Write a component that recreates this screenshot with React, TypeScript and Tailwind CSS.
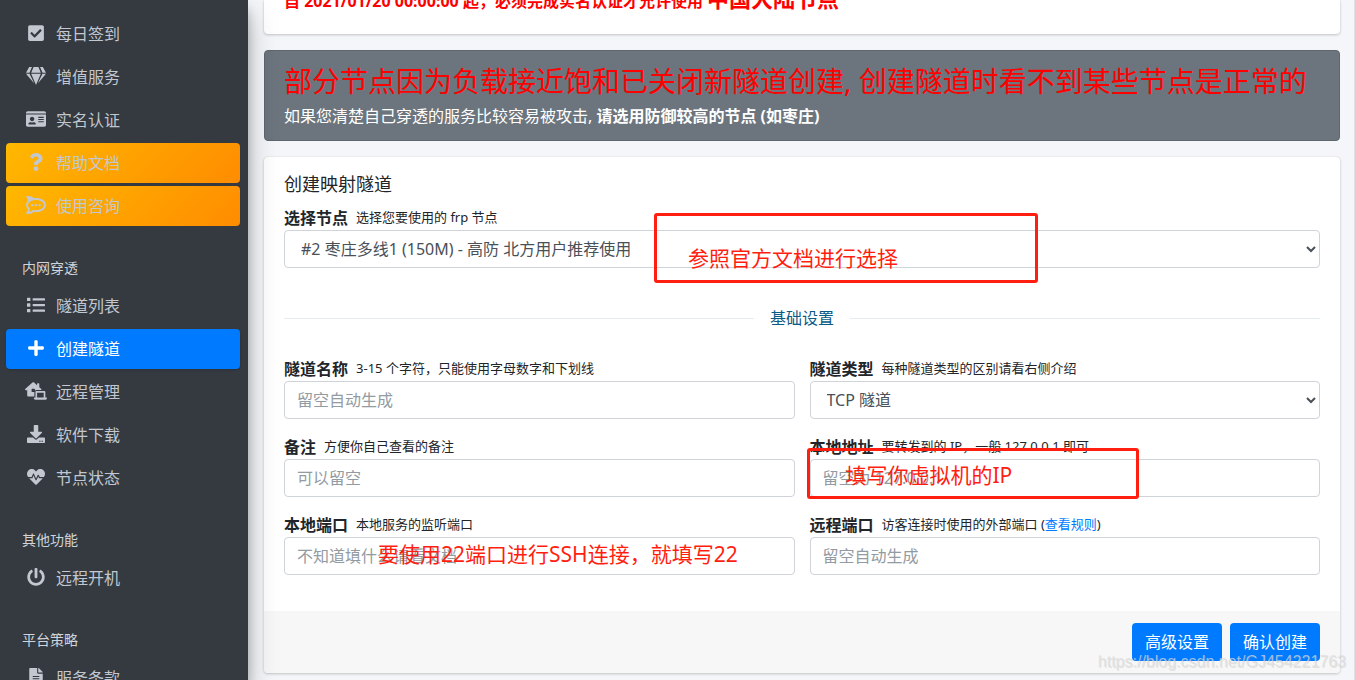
import React from 'react';
import {
  FaCheckSquare,
  FaDownload,
  FaFileAlt,
  FaGem,
  FaHeartbeat,
  FaIdCard,
  FaLaptopHouse,
  FaList,
  FaPlus,
  FaPowerOff,
  FaQuestion,
  FaRocketchat
} from 'react-icons/fa';
import type { IconType } from 'react-icons';

interface NavItem {
  label: string;
  icon: IconType;
  iconClassName?: string;
  variant?: 'default' | 'active' | 'highlight';
}

interface NavGroup {
  title?: string;
  items: NavItem[];
}

const navGroups: NavGroup[] = [
  {
    items: [
      { label: '每日签到', icon: FaCheckSquare },
      { label: '增值服务', icon: FaGem, iconClassName: 'w-5' },
      { label: '实名认证', icon: FaIdCard, iconClassName: 'w-5' },
      { label: '帮助文档', icon: FaQuestion, variant: 'highlight' },
      { label: '使用咨询', icon: FaRocketchat, iconClassName: 'w-5', variant: 'highlight' }
    ]
  },
  {
    title: '内网穿透',
    items: [
      { label: '隧道列表', icon: FaList },
      { label: '创建隧道', icon: FaPlus, variant: 'active' },
      { label: '远程管理', icon: FaLaptopHouse, iconClassName: 'w-[22px]' },
      { label: '软件下载', icon: FaDownload },
      { label: '节点状态', icon: FaHeartbeat }
    ]
  },
  {
    title: '其他功能',
    items: [{ label: '远程开机', icon: FaPowerOff }]
  },
  {
    title: '平台策略',
    items: [{ label: '服务条款', icon: FaFileAlt }]
  }
];

const controlStyles =
  'block w-full h-[38px] rounded border border-[#ced4da] bg-white px-3 text-base text-[#495057] placeholder:text-[#939ba2] placeholder:opacity-100';

function NavLink({ label, icon: Icon, iconClassName = 'w-[18px]', variant = 'default' }: NavItem) {
  const getVariantStyles = () => {
    switch (variant) {
      case 'active':
        return 'bg-[#007bff] text-white shadow';
      case 'highlight':
        return 'bg-linear-135 from-[#ffb800] via-[#ffa200] to-[#ff8c00] text-[#c2c7d0]';
      default:
        return 'text-[#c2c7d0] hover:bg-white/10';
    }
  };

  return (
    <a
      href="#"
      className={`flex h-10 items-center gap-1.5 rounded px-4 text-base ${getVariantStyles()}`}
    >
      <span className="flex w-7 justify-center pb-0.5">
        <Icon className={`h-[18px] ${iconClassName}`} />
      </span>
      {label}
    </a>
  );
}

function Sidebar() {
  return (
    <aside className="z-10 w-[248px] shrink-0 overflow-hidden bg-[#343a40] pt-3.5 pr-2 pl-1.5 shadow-[0_14px_28px_rgba(0,0,0,0.25),0_10px_10px_rgba(0,0,0,0.22)]">
      <nav>
        {navGroups.map((group, index) => (
          <div key={index}>
            {group.title && (
              <h2 className="px-4 pt-8 pb-2 text-sm text-[#d0d4db]">{group.title}</h2>
            )}
            <ul className="flex flex-col gap-[3px]">
              {group.items.map((item) => (
                <li key={item.label}>
                  <NavLink {...item} />
                </li>
              ))}
            </ul>
          </div>
        ))}
      </nav>
    </aside>
  );
}

interface FieldProps {
  id: string;
  label: string;
  hint: React.ReactNode;
  children: React.ReactNode;
}

function Field({ id, label, hint, children }: FieldProps) {
  return (
    <div>
      <div className="flex h-6 items-center gap-2 whitespace-nowrap text-[#212529]">
        <label htmlFor={id} className="text-base font-bold">
          {label}
        </label>
        <span className="text-[13px]">{hint}</span>
      </div>
      <div className="relative">{children}</div>
    </div>
  );
}

function NoteBox({ className, children }: { className: string; children: React.ReactNode }) {
  return (
    <div
      className={`pointer-events-none absolute rounded-[3px] border-3 border-[#ff1e10] text-[21px] leading-6 whitespace-nowrap text-[#ff1e10] ${className}`}
    >
      {children}
    </div>
  );
}

function TunnelForm() {
  return (
    <form className="overflow-hidden rounded bg-white shadow-[0_0_1px_rgba(0,0,0,0.125),0_1px_3px_rgba(0,0,0,0.2)]">
      <div className="px-5 pt-[13px] pb-9">
        <h3 className="mb-2 text-lg text-[#212529]">创建映射隧道</h3>

        <Field id="node" label="选择节点" hint="选择您要使用的 frp 节点">
          <select id="node" className={controlStyles}>
            <option>#2 枣庄多线1 (150M) - 高防 北方用户推荐使用</option>
          </select>
          <NoteBox className="-top-[17px] left-[370px] h-[70px] w-96 pt-[30px] pl-[31px]">
            参照官方文档进行选择
          </NoteBox>
        </Field>

        {/* Section divider */}
        <div className="mt-[38px] mb-[27px] flex items-center gap-4 text-base text-[#0c5a86]">
          <span className="h-px flex-1 bg-[#e4edf1]" />
          基础设置
          <span className="h-px flex-1 bg-[#e4edf1]" />
        </div>

        <div className="grid grid-cols-2 gap-x-[15px] gap-y-4">
          <Field id="name" label="隧道名称" hint="3-15 个字符，只能使用字母数字和下划线">
            <input id="name" type="text" placeholder="留空自动生成" className={controlStyles} />
          </Field>
          <Field id="type" label="隧道类型" hint="每种隧道类型的区别请看右侧介绍">
            <select id="type" className={controlStyles}>
              <option>TCP 隧道</option>
            </select>
          </Field>
          <Field id="remark" label="备注" hint="方便你自己查看的备注">
            <input id="remark" type="text" placeholder="可以留空" className={controlStyles} />
          </Field>
          <Field id="local-ip" label="本地地址" hint="要转发到的 IP，一般 127.0.0.1 即可">
            <input id="local-ip" type="text" placeholder="留空为 127.0.0.1" className={controlStyles} />
            <NoteBox className="-top-[11px] -left-[3px] h-[51px] w-[332px] pt-3 pl-9">
              填写你虚拟机的IP
            </NoteBox>
          </Field>
          <Field id="local-port" label="本地端口" hint="本地服务的监听端口">
            <input
              id="local-port"
              type="text"
              placeholder="不知道填什么请看文档"
              className={controlStyles}
            />
            <p className="pointer-events-none absolute top-[5px] left-[94px] text-[21px] leading-6 whitespace-nowrap text-[#ff1e10]">
              要使用22端口进行SSH连接，就填写22
            </p>
          </Field>
          <Field
            id="remote-port"
            label="远程端口"
            hint={
              <>
                访客连接时使用的外部端口 (
                <a href="#" className="text-[#007bff]">
                  查看规则
                </a>
                )
              </>
            }
          >
            <input id="remote-port" type="text" placeholder="留空自动生成" className={controlStyles} />
          </Field>
        </div>
      </div>

      <div className="flex justify-end gap-2 bg-[#f7f7f7] px-5 py-3">
        <button type="button" className="h-[38px] rounded bg-[#007bff] px-[13px] text-base text-white">
          高级设置
        </button>
        <button type="submit" className="h-[38px] rounded bg-[#007bff] px-[13px] text-base text-white">
          确认创建
        </button>
      </div>
    </form>
  );
}

export default function App() {
  return (
    <div className="relative flex h-screen overflow-hidden bg-[#f4f6f9] font-['Noto_Sans','Noto_Sans_CJK_SC',sans-serif]">
      <Sidebar />

      <main className="flex min-w-0 flex-1 flex-col gap-4 pr-3.5 pl-4">
        {/* Notice card, scrolled most of the way out */}
        <section className="flex h-[34px] shrink-0 flex-col justify-end rounded-b bg-white px-5 pb-[19px] shadow-[0_0_1px_rgba(0,0,0,0.125),0_1px_3px_rgba(0,0,0,0.2)]">
          <p className="text-base leading-7 font-bold whitespace-nowrap text-[#ff0000]">
            自 2021/01/20 00:00:00 起，必须完成实名认证才允许使用{' '}
            <span className="text-[22px] leading-7">中国大陆节点</span>
          </p>
        </section>

        <section className="rounded border border-[#5f676e] bg-[#6c757d] px-[19px] py-3 text-white">
          <h1 className="mb-1 text-[28px] leading-[37px] text-[#ff0000]">
            部分节点因为负载接近饱和已关闭新隧道创建, 创建隧道时看不到某些节点是正常的
          </h1>
          <p className="text-base">
            如果您清楚自己穿透的服务比较容易被攻击, <b>请选用防御较高的节点 (如枣庄)</b>
          </p>
        </section>

        <TunnelForm />
      </main>

      {/* Edge of the side column */}
      <aside className="w-px shrink-0 bg-[#dfe1e5]" />

      <div className="pointer-events-none absolute right-[9px] bottom-1.5 z-20 font-['Liberation_Sans',sans-serif] text-base text-[#dcdcdc]/70 [text-shadow:1px_1px_0_rgba(160,160,160,0.25)]">
        https://blog.csdn.net/GJ454221763
      </div>
    </div>
  );
}
